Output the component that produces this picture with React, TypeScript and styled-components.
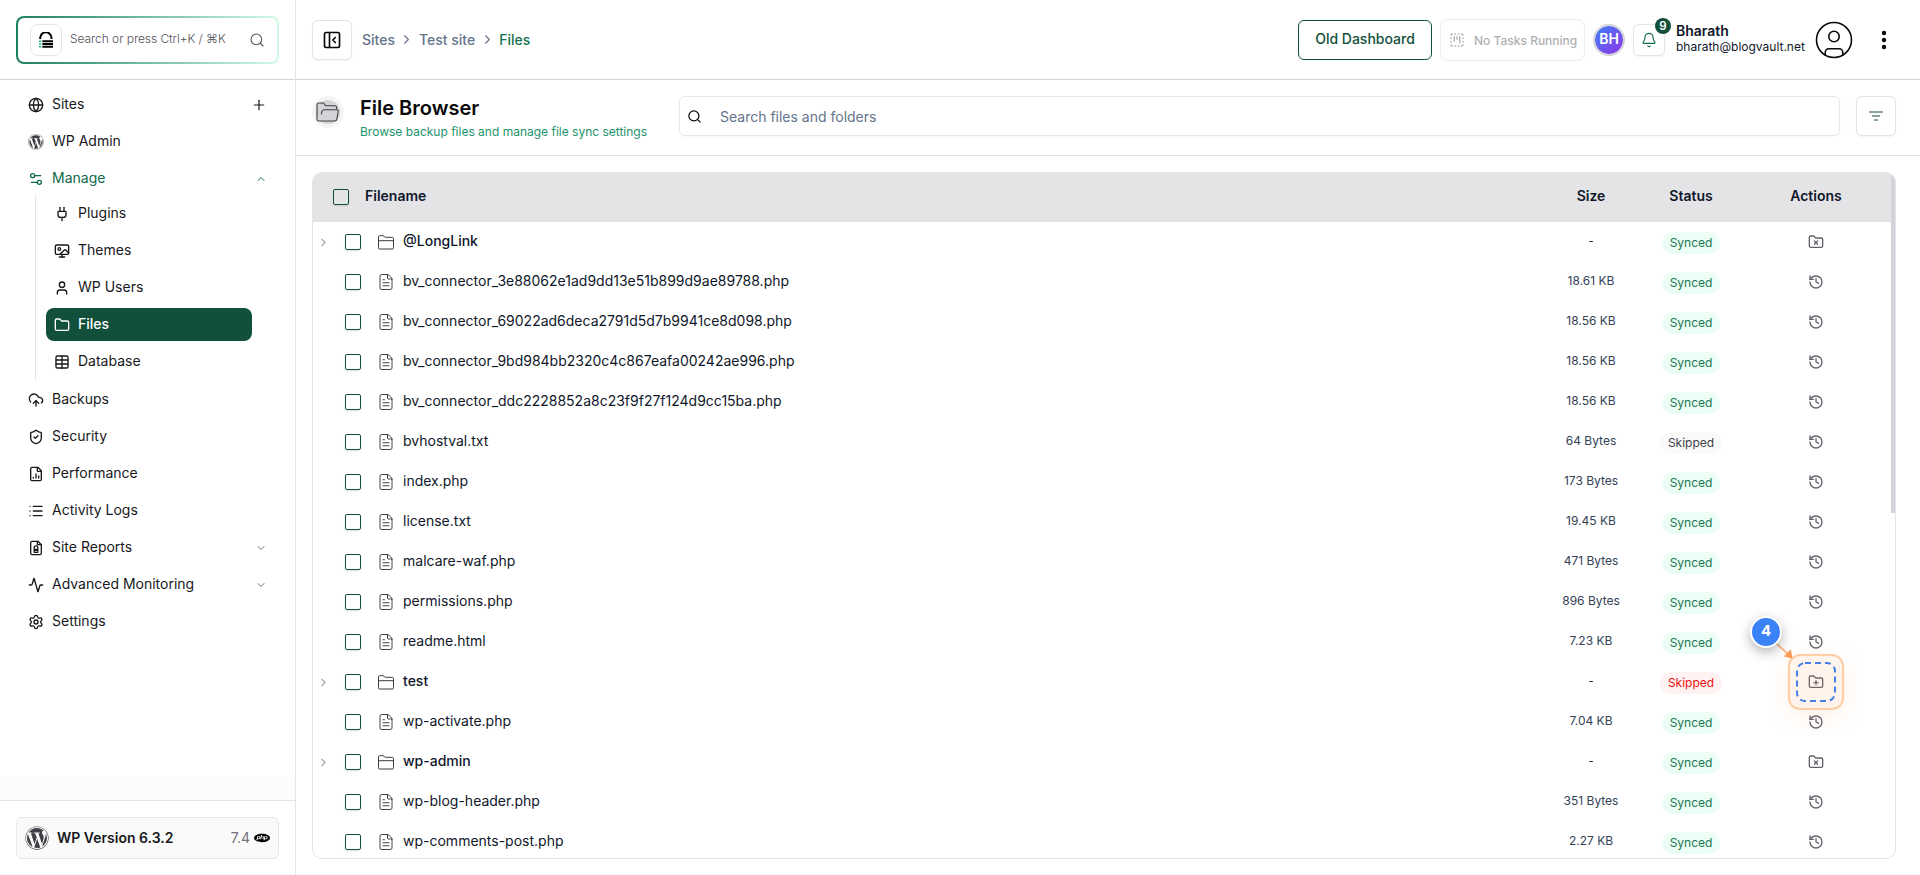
import React from 'react';
import styled, { createGlobalStyle, css } from 'styled-components';
import {
  Activity, Bell, ChevronDown, ChevronRight, ChevronUp, CircleUser, CloudUpload, EllipsisVertical,
  FileChartColumn, FileText, Folder, FolderPlus, FolderX, Globe, History, List, PanelLeftClose, Plug,
  Plus, Search, Settings, Settings2, ShieldCheck, SquareDashedKanban, Table, User, Wallpaper,
} from 'lucide-react';
import { FaWordpress } from 'react-icons/fa';
import { SiPhp } from 'react-icons/si';

const GlobalStyle = createGlobalStyle`
  * { box-sizing: border-box; }
  body { margin: 0; background: #fff; font-family: Inter, "Liberation Sans", sans-serif; font-size: 14px; line-height: 20px; color: #09090b; overflow: hidden; }
  svg { display: block; flex: none; }
`;

const Page = styled.div`
  display: flex;
  height: 875px;
`;

const Sidebar = styled.aside`
  width: 296px;
  flex: none;
  display: flex;
  flex-direction: column;
  border-right: 1px solid #e4e4ef;
`;

const SidebarTop = styled.div`
  height: 80px;
  padding: 16px 16px 0;
  border-bottom: 1px solid #d4d4d4;
`;

const QuickSearch = styled.div`
  display: flex;
  align-items: center;
  height: 48px;
  padding: 0 12px 0 12px;
  border: 2px solid transparent;
  border-radius: 8px;
  background: linear-gradient(#fff, #fff) padding-box, linear-gradient(90deg, #1c7f5f, #d1fae5) border-box;
`;

const LogoBox = styled.span`
  display: grid;
  place-items: center;
  width: 32px;
  height: 32px;
  border: 1px solid #e4e4e7;
  border-radius: 8px;
`;

const QuickText = styled.span`
  flex: 1;
  padding: 0 0 3px 8px;
  font-size: 12px;
  letter-spacing: -0.06px;
  font-weight: 300;
  color: #52525b;
  white-space: nowrap;
`;

const Nav = styled.nav`
  flex: 1;
  display: flex;
  flex-direction: column;
  gap: 4px;
  padding: 8px 21px 0 16px;
`;

const NavItem = styled.div<{ $tone?: 'green' | 'active'; $nested?: boolean }>`
  display: flex;
  align-items: center;
  gap: 8px;
  height: 33px;
  padding: 0 7px 0 12px;
  color: #18181b;
  ${p => p.$nested && css`padding: 0 8px;`}
  ${p => p.$tone === 'green' && css`color: #11694b;`}
  ${p => p.$tone === 'active' && css`
    color: #fff;
    background: #12503c;
    border-radius: 8px;
    font-weight: 500;
  `}
`;

const NavLabel = styled.span`
  flex: 1;
  padding-bottom: 1px;
`;

const SubNav = styled.div`
  display: flex;
  flex-direction: column;
  gap: 4px;
  margin: -4px 22px -1px 19px;
  padding: 2px 0 2px 10px;
  border-left: 1px solid #e4e4e7;
`;

const SidebarFade = styled.div`
  height: 24px;
  background: #fcfcfc;
`;

const SidebarBottom = styled.div`
  height: 75px;
  padding: 16px 16px 0;
  border-top: 1px solid #e4e4e7;
`;

const VersionCard = styled.div`
  display: flex;
  align-items: center;
  height: 42px;
  padding: 0 8px;
  border: 1px solid #e2e8f0;
  border-radius: 6px;
  background: #fafafa;
  color: #3f3f46;
`;

const VersionName = styled.strong`
  flex: 1;
  padding-left: 8px;
  font-weight: 600;
  color: #18181b;
`;

const PhpVersion = styled.span`
  display: flex;
  align-items: center;
  gap: 4px;
  color: #71717a;
  svg { color: #000; }
`;

const Main = styled.main`
  flex: 1;
  min-width: 0;
  display: flex;
  flex-direction: column;
`;

const TopBar = styled.header`
  display: flex;
  align-items: center;
  height: 80px;
  padding: 0 24px 0 16px;
  border-bottom: 1px solid #d4d4d4;
`;

const SquareButton = styled.button<{ $size: number }>`
  position: relative;
  display: grid;
  place-items: center;
  flex: none;
  width: ${p => p.$size}px;
  height: ${p => p.$size}px;
  padding: 0;
  background: #fff;
  border: 1px solid #e4e4e7;
  border-radius: 6px;
  box-shadow: 0 1px 2px rgba(0, 0, 0, 0.05);
  color: #09090b;
`;

const Crumbs = styled.div`
  flex: 1;
  display: flex;
  align-items: center;
  gap: 4.5px;
  padding-left: 10px;
  font-weight: 500;
  color: #64748b;
`;

const CurrentCrumb = styled.span`
  color: #14734f;
`;

const OldDashboard = styled.button`
  height: 40px;
  width: 134px;
  padding: 0 0 2px;
  border: 1px solid #12503c;
  border-radius: 6px;
  background: #fff;
  color: #12503c;
  font: 500 14px/20px Inter, sans-serif;
`;

const TasksButton = styled.div`
  display: flex;
  align-items: center;
  gap: 9px;
  width: 145px;
  height: 42px;
  margin: 0 8px;
  padding-left: 8px;
  border: 1px solid #ededee;
  border-radius: 8px;
  color: #b0b0b3;
  font-size: 12px;
  font-weight: 500;
  white-space: nowrap;
`;

const TasksText = styled.span`
  padding-top: 3px;
`;

const Avatar = styled.span`
  display: grid;
  place-items: center;
  width: 32px;
  height: 32px;
  margin-right: 8px;
  padding-bottom: 2px;
  border: 2px solid #d4d4d8;
  border-radius: 50%;
  background: linear-gradient(135deg, #3b82f6, #9333ea) padding-box;
  color: #fff;
  font-weight: 600;
`;

const CountBadge = styled.span`
  position: absolute;
  top: -7px;
  right: -7px;
  width: 16px;
  height: 16px;
  border-radius: 50%;
  background: #12503c;
  color: #fff;
  font: 600 11.5px/16px Inter, sans-serif;
  text-align: center;
`;

const Account = styled.div`
  flex: none;
  display: flex;
  flex-direction: column;
  width: 148px;
  padding: 0 0 3px 11px;
  color: #0f172a;
  font-size: 12px;
  line-height: 15px;
`;

const AccountName = styled.strong`
  font-size: 14px;
  line-height: 16px;
  font-weight: 600;
`;

const AccountIcon = styled.span`
  margin-right: 17px;
`;

const TitleBar = styled.section`
  display: flex;
  align-items: flex-start;
  height: 76px;
  padding: 16px 24px 0 16px;
  border-bottom: 1px solid #e4e4e7;
`;

const FolderDisc = styled.span`
  display: grid;
  place-items: center;
  width: 32px;
  height: 32px;
  border: 4px solid #f4f4f5;
  border-radius: 50%;
  background: #d4d4d8;
`;

const Titles = styled.div`
  width: 335px;
  padding-left: 16px;
`;

const Title = styled.h1`
  margin: 0;
  font-size: 20px;
  line-height: 24px;
  font-weight: 600;
`;

const Subtitle = styled.div`
  padding-top: 3px;
  font-size: 12px;
  line-height: 18px;
  color: #22946a;
`;

const FileSearch = styled.div`
  flex: 1;
  display: flex;
  align-items: center;
  gap: 18px;
  height: 40px;
  margin-right: 16px;
  padding-left: 7px;
  border: 1px solid #e2e8f0;
  border-radius: 6px;
  box-shadow: 0 1px 2px rgba(0, 0, 0, 0.03);
`;

const Placeholder = styled.span`
  padding-top: 2px;
  color: #64748b;
`;

const TableFrame = styled.div`
  position: relative;
  height: 687px;
  margin: 16px 24px 0 16px;
  border: 1px solid #e4e4e7;
  border-radius: 10px;
  overflow: hidden;
`;

const rowGrid = css`
  display: grid;
  grid-template-columns: 1fr 100px 100px 150px;
  padding-right: 4px;
  align-items: center;
`;

const HeadRow = styled.div`
  ${rowGrid}
  height: 49px;
  padding-bottom: 1px;
  background: #e4e4e7;
  color: #0f172a;
  font-weight: 600;
`;

const HeadName = styled.div`
  display: flex;
  align-items: center;
  gap: 16px;
  padding-left: 20px;
`;

const HeadLabel = styled.span`
  padding-bottom: 2px;
`;

const Cell = styled.div`
  display: flex;
  justify-content: center;
`;

const Row = styled.div`
  ${rowGrid}
  height: 40px;
`;

const NameCell = styled.div`
  display: flex;
  align-items: center;
  padding-left: 3px;
`;

const Toggle = styled.span`
  width: 29px;
  padding-left: 1px;
  color: #a1a1aa;
`;

const Checkbox = styled.span`
  width: 16px;
  height: 16px;
  border: 1px solid #12503c;
  border-radius: 2px;
  box-shadow: 0 1px 2px rgba(0, 0, 0, 0.12);
`;

const KindIcon = styled.span`
  display: flex;
  justify-content: center;
  width: 16px;
  margin: 0 9px 0 17px;
  color: #27272a;
`;

const FileName = styled.span<{ $folder?: boolean }>`
  padding-bottom: 2px;
  color: #0f172a;
  font-weight: ${p => (p.$folder ? 500 : 400)};
`;

const SizeText = styled.span`
  padding-bottom: 3px;
  font-size: 12px;
  color: #334155;
`;

const Status = styled.span<{ $tone: string }>`
  height: 22px;
  margin-top: 2px;
  padding: 0 8px;
  border-radius: 11px;
  font-size: 12px;
  line-height: 21px;
  color: ${p => (p.$tone === 'green' ? '#177a54' : p.$tone === 'red' ? '#ef1111' : '#3f3f46')};
  background: ${p => (p.$tone === 'green' ? '#ecfdf5' : p.$tone === 'red' ? '#fef2f2' : '#fafafa')};
`;

const ActionCell = styled(Cell)`
  color: #62626b;
`;

const ScrollThumb = styled.div`
  position: absolute;
  top: -1px;
  right: -1px;
  width: 5px;
  height: 341px;
  background: #d1d5db;
`;

const Highlight = styled.div`
  position: absolute;
  left: 1788px;
  top: 654px;
  width: 56px;
  height: 56px;
  padding: 6px;
  border: 2px solid rgba(251, 146, 60, 0.4);
  border-radius: 12px;
  background: rgba(251, 146, 60, 0.1);
  box-shadow: 0 6px 22px rgba(251, 146, 60, 0.13);
`;

const Step = styled.div`
  position: absolute;
  left: 1750px;
  top: 616px;
  width: 32px;
  height: 32px;
  border: 2px solid #fff;
  border-radius: 50%;
  background: #3b82f6;
  box-shadow: 0 4px 12px rgba(0, 0, 0, 0.3);
  color: #fff;
  font-size: 15px;
  font-weight: 700;
  line-height: 26px;
  text-align: center;
`;

const Arrow = styled.svg`
  position: absolute;
  left: 1774px;
  top: 640px;
`;

const ReportIcon = () => (
  <svg width="16" height="16" viewBox="0 0 24 24" fill="none" stroke="currentColor" strokeWidth="2" strokeLinecap="round" strokeLinejoin="round">
    <path d="M15 2H6a2 2 0 0 0-2 2v16a2 2 0 0 0 2 2h12a2 2 0 0 0 2-2V7z" />
    <path d="M14 2v5h6" />
    <circle cx="12" cy="11.5" r="2.8" />
    <path d="M9.3 14v4.5h5.4V14M9.5 15.5h5" />
  </svg>
);

const VaultLogo = () => (
  <svg width="14" height="16" viewBox="0 0 14 16" fill="none">
    <path d="M1.2 7V6a5.3 5.3 0 0 1 11.3 0v1" stroke="#000" strokeWidth="2" />
    <path d="M3.4 9.2H14M3.4 12H14M3.4 14.8H14" stroke="#000" strokeWidth="2.1" />
    <path d="M0 9.2h2.4M0 12h2.4M0 14.8h2.4" stroke="#2bb58b" strokeWidth="1.4" />
  </svg>
);

const ThinFolder = () => (
  <svg width="16" height="15" viewBox="0 0 16 15" fill="none" stroke="currentColor" strokeWidth="0.9">
    <path d="M.5 12.7V1.9C.5 1 .9.7 1.6.7h3.6l2 1.6h7.2c.8 0 1.1.5 1.1 1.2v9.2c0 .8-.4 1.3-1.2 1.3H1.7c-.8 0-1.2-.5-1.2-1.3z" />
    <path d="M.5 5.7h15" />
  </svg>
);

const OpenFolder = () => (
  <svg width="24" height="22" viewBox="0 0 24 22" fill="none" stroke="#3f3f46" strokeWidth="1.1" strokeLinejoin="round">
    <path d="M2.8 20C1.7 20 1 19.2 1 18V4.3C1 3 1.7 2 3 2h3.6c.8 0 1.2.3 1.700 1l1.200 1.700h9c1.500 0 2.200.8 2.200 2v2" />
    <path d="M2.500 20h16.200c1.300 0 2-.6 2.200-1.800l1.300-7.500c.2-1.200-.4-2-1.500-2H8.200c-1.200 0-1.900.5-2.200 1.600l-.6 3" />
  </svg>
);

const FilterBars = () => (
  <svg width="16" height="16" viewBox="0 0 16 16" stroke="#8aa79d" strokeWidth="1.8">
    <path d="M1 4h14M4 8h8M6 12h4" />
  </svg>
);

type FileEntry = { name: string; size: string; folder?: boolean; status?: string; tone?: string };

const files: FileEntry[] = [
  { name: '@LongLink', size: '-', folder: true },
  { name: 'bv_connector_3e88062e1ad9dd13e51b899d9ae89788.php', size: '18.61 KB' },
  { name: 'bv_connector_69022ad6deca2791d5d7b9941ce8d098.php', size: '18.56 KB' },
  { name: 'bv_connector_9bd984bb2320c4c867eafa00242ae996.php', size: '18.56 KB' },
  { name: 'bv_connector_ddc2228852a8c23f9f27f124d9cc15ba.php', size: '18.56 KB' },
  { name: 'bvhostval.txt', size: '64 Bytes', status: 'Skipped', tone: 'gray' },
  { name: 'index.php', size: '173 Bytes' },
  { name: 'license.txt', size: '19.45 KB' },
  { name: 'malcare-waf.php', size: '471 Bytes' },
  { name: 'permissions.php', size: '896 Bytes' },
  { name: 'readme.html', size: '7.23 KB' },
  { name: 'test', size: '-', folder: true, status: 'Skipped', tone: 'red' },
  { name: 'wp-activate.php', size: '7.04 KB' },
  { name: 'wp-admin', size: '-', folder: true },
  { name: 'wp-blog-header.php', size: '351 Bytes' },
  { name: 'wp-comments-post.php', size: '2.27 KB' },
];

const FileRow = ({ file }: { file: FileEntry }) => {
  const Action = !file.folder ? History : file.tone === 'red' ? FolderPlus : FolderX;
  return (
    <Row>
      <NameCell>
        <Toggle>{file.folder && <ChevronRight size={13} />}</Toggle>
        <Checkbox />
        <KindIcon>{file.folder ? <ThinFolder /> : <FileText size={18} strokeWidth={1.15} />}</KindIcon>
        <FileName $folder={file.folder}>{file.name}</FileName>
      </NameCell>
      <Cell><SizeText>{file.size}</SizeText></Cell>
      <Cell><Status $tone={file.tone ?? 'green'}>{file.status ?? 'Synced'}</Status></Cell>
      <ActionCell><Action size={16} strokeWidth={2} /></ActionCell>
    </Row>
  );
};

const App = () => (
  <>
    <GlobalStyle />
    <Page>
      <Sidebar>
        <SidebarTop>
          <QuickSearch>
            <LogoBox><VaultLogo /></LogoBox>
            <QuickText>Search or press Ctrl+K / ⌘K</QuickText>
            <Search size={16} strokeWidth={1.6} color="#52525b" />
          </QuickSearch>
        </SidebarTop>
        <Nav>
          <NavItem><Globe size={16} /><NavLabel>Sites</NavLabel><Plus size={16} strokeWidth={1.8} /></NavItem>
          <NavItem><FaWordpress size={16} color="#3f3f46" /><NavLabel>WP Admin</NavLabel></NavItem>
          <NavItem $tone="green"><Settings2 size={16} /><NavLabel>Manage</NavLabel><ChevronUp size={12} /></NavItem>
          <SubNav>
            <NavItem $nested><Plug size={16} /><NavLabel>Plugins</NavLabel></NavItem>
            <NavItem $nested><Wallpaper size={16} /><NavLabel>Themes</NavLabel></NavItem>
            <NavItem $nested><User size={16} /><NavLabel>WP Users</NavLabel></NavItem>
            <NavItem $nested $tone="active"><Folder size={16} /><NavLabel>Files</NavLabel></NavItem>
            <NavItem $nested><Table size={16} /><NavLabel>Database</NavLabel></NavItem>
          </SubNav>
          <NavItem><CloudUpload size={16} /><NavLabel>Backups</NavLabel></NavItem>
          <NavItem><ShieldCheck size={16} /><NavLabel>Security</NavLabel></NavItem>
          <NavItem><FileChartColumn size={16} /><NavLabel>Performance</NavLabel></NavItem>
          <NavItem><List size={16} /><NavLabel>Activity Logs</NavLabel></NavItem>
          <NavItem><ReportIcon /><NavLabel>Site Reports</NavLabel><ChevronDown size={12} color="#71717a" /></NavItem>
          <NavItem><Activity size={16} /><NavLabel>Advanced Monitoring</NavLabel><ChevronDown size={12} color="#71717a" /></NavItem>
          <NavItem><Settings size={16} /><NavLabel>Settings</NavLabel></NavItem>
        </Nav>
        <SidebarFade />
        <SidebarBottom>
          <VersionCard>
            <FaWordpress size={24} />
            <VersionName>WP Version 6.3.2</VersionName>
            <PhpVersion>7.4 <SiPhp size={16} /></PhpVersion>
          </VersionCard>
        </SidebarBottom>
      </Sidebar>

      <Main>
        <TopBar>
          <SquareButton $size={40}><PanelLeftClose size={20} /></SquareButton>
          <Crumbs>
            <span>Sites</span><ChevronRight size={15} strokeWidth={1.8} />
            <span>Test site</span><ChevronRight size={15} strokeWidth={1.8} />
            <CurrentCrumb>Files</CurrentCrumb>
          </Crumbs>
          <OldDashboard>Old Dashboard</OldDashboard>
          <TasksButton><SquareDashedKanban size={16} /><TasksText>No Tasks Running</TasksText></TasksButton>
          <Avatar>BH</Avatar>
          <SquareButton $size={32}>
            <Bell size={16} strokeWidth={1.7} color="#12694b" />
            <CountBadge>9</CountBadge>
          </SquareButton>
          <Account>
            <AccountName>Bharath</AccountName>
            <span>bharath@blogvault.net</span>
          </Account>
          <AccountIcon><CircleUser size={42} strokeWidth={0.9} /></AccountIcon>
          <EllipsisVertical size={24} strokeWidth={2.4} />
        </TopBar>

        <TitleBar>
          <FolderDisc><OpenFolder /></FolderDisc>
          <Titles>
            <Title>File Browser</Title>
            <Subtitle>Browse backup files and manage file sync settings</Subtitle>
          </Titles>
          <FileSearch>
            <Search size={15} />
            <Placeholder>Search files and folders</Placeholder>
          </FileSearch>
          <SquareButton $size={40}><FilterBars /></SquareButton>
        </TitleBar>

        <TableFrame>
          <HeadRow>
            <HeadName><Checkbox /><HeadLabel>Filename</HeadLabel></HeadName>
            <Cell><HeadLabel>Size</HeadLabel></Cell>
            <Cell><HeadLabel>Status</HeadLabel></Cell>
            <Cell><HeadLabel>Actions</HeadLabel></Cell>
          </HeadRow>
          {files.map(file => <FileRow key={file.name} file={file} />)}
          <ScrollThumb />
        </TableFrame>
      </Main>
    </Page>

    <Arrow width="22" height="22" viewBox="0 0 22 22">
      <path d="M3 4l12 11" stroke="#fdba8c" strokeWidth="1.8" />
      <path d="M18.500 18.500L9.800 16.500 16.800 9.200z" fill="#fb9d5a" />
    </Arrow>
    <Highlight>
      <svg width="40" height="40" fill="none">
        <rect x="1" y="1" width="38" height="38" rx="8" stroke="#4580e6" strokeWidth="2" strokeDasharray="6 4" />
      </svg>
    </Highlight>
    <Step>4</Step>
  </>
);

export default App;
